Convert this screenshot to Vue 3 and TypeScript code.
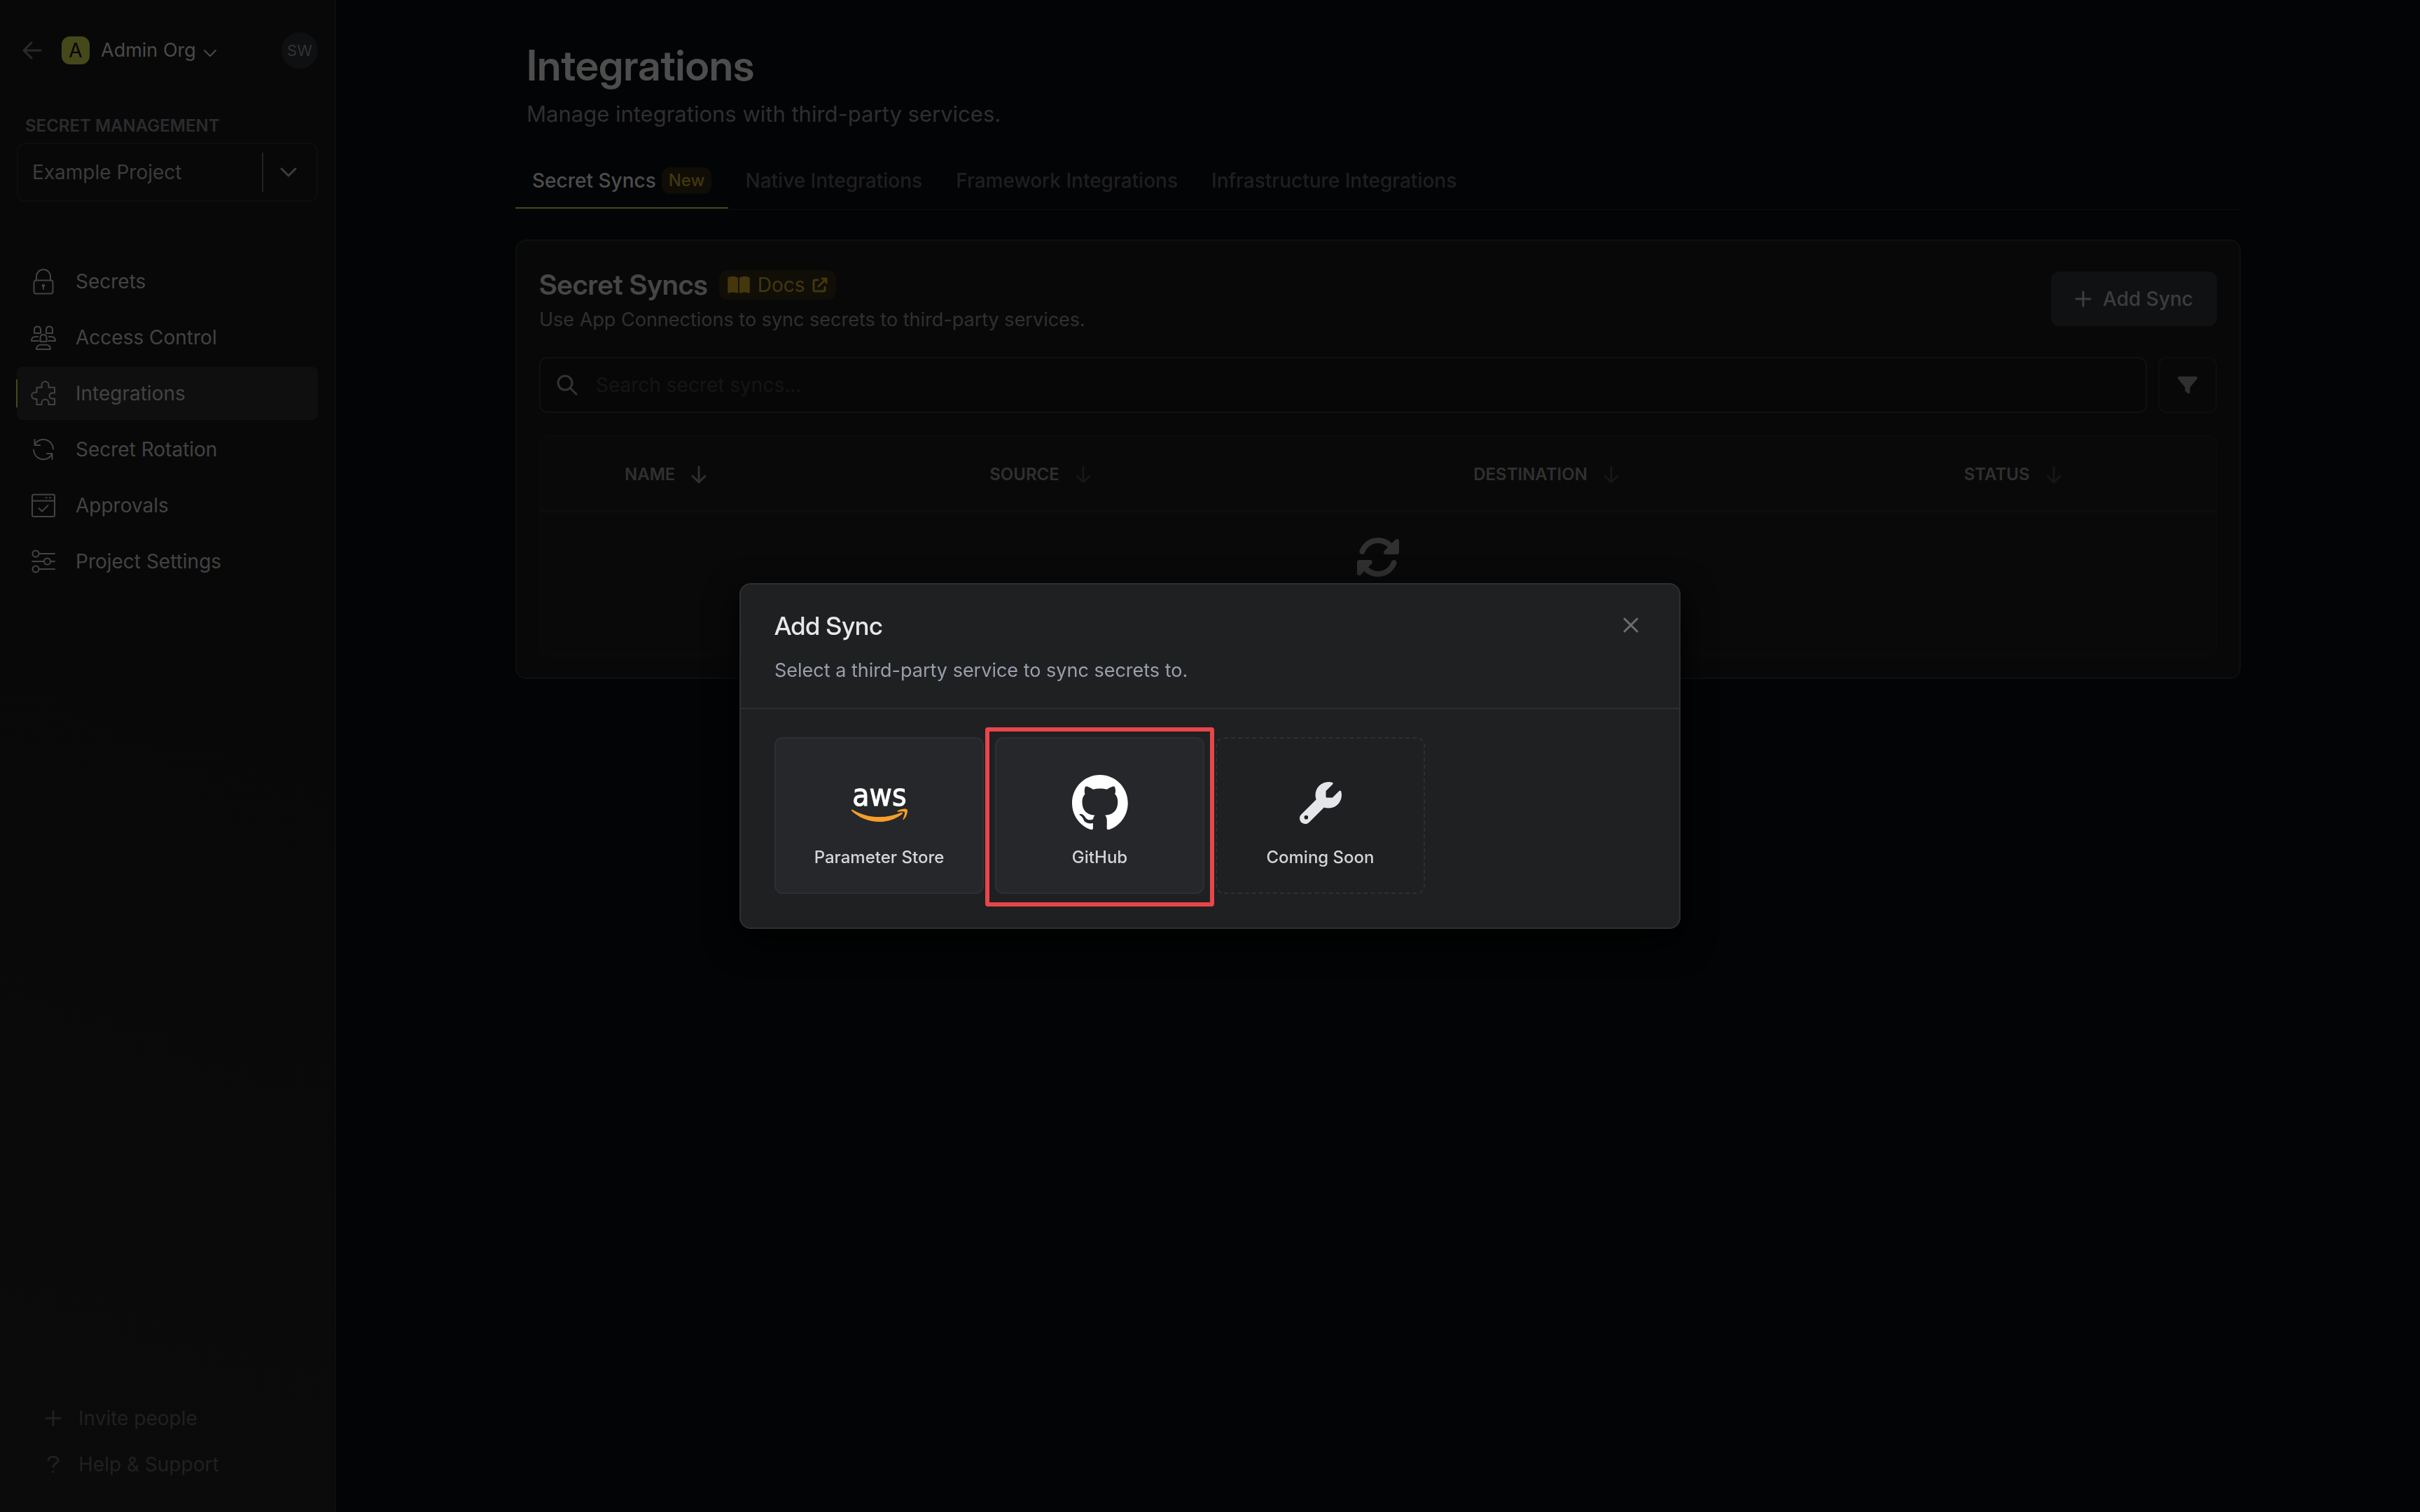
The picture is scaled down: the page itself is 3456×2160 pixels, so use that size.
<script setup lang="ts">
import { ref } from 'vue'

interface NavItem {
  label: string
  paths: string[]
}

interface Column {
  label: string
  width: string
  sorted: boolean
}

const navItems: NavItem[] = [
  {
    label: 'Secrets',
    paths: [
      'M7.5 16.5h21a3 3 0 0 1 3 3v13a3 3 0 0 1-3 3h-21a3 3 0 0 1-3-3v-13a3 3 0 0 1 3-3z',
      'M8 16.5V11a10 10 0 0 1 20 0v5.5',
      'M17 23h2v2h-2zM18 25v4',
    ],
  },
  {
    label: 'Access Control',
    paths: [
      'M9.5 2.5c3 0 4.5 2 4.5 4.5v5H5V7c0-2.5 1.5-4.5 4.5-4.5z',
      'M26.5 2.5c3 0 4.5 2 4.5 4.5v5h-9V7c0-2.5 1.5-4.5 4.5-4.5z',
      'M18 14c3 0 4.5 2 4.5 4.5v5.5h-9v-5.5c0-2.5 1.5-4.5 4.5-4.5z',
      'M10 17H7c-4 0-6 2.5-6 6h10M26 17h3c4 0 6 2.5 6 6H25',
      'M8 35c0-4 2.5-6.5 7-6.5h6c4.5 0 7 2.5 7 6.5z',
    ],
  },
  {
    label: 'Integrations',
    paths: [
      'M8.5 9.5h7V6a5 5 0 0 1 10 0v3.5H34v8h-3.5a4 4 0 0 0 0 8H34V34h-8.5v-2.5a5 5 0 0 0-10 0V34h-7v-8H6a4.75 4.75 0 0 1 0-9.5h2.5z',
    ],
  },
  {
    label: 'Secret Rotation',
    paths: [
      'M6 10.5A14 14 0 0 1 32 17.5M5.5 4v8H13',
      'M4 18.5A14 14 0 0 0 30 25.5M23 24h7.5v8',
    ],
  },
  {
    label: 'Approvals',
    paths: [
      'M4 2.5h28a2 2 0 0 1 2 2V32a2 2 0 0 1-2 2H4a2 2 0 0 1-2-2V4.5a2 2 0 0 1 2-2z',
      'M2 11.5h32M21.5 7h1M27 7h1',
      'M11.5 22l4.5 4.5 8.5-8.5',
    ],
  },
  {
    label: 'Project Settings',
    paths: [
      'M11.5 7a4.5 4.5 0 1 1-9 0 4.5 4.5 0 0 1 9 0zM11.5 7H34',
      'M28 18a4.5 4.5 0 1 1-9 0 4.5 4.5 0 0 1 9 0zM2 18h17M28 18h6',
      'M11.5 29a4.5 4.5 0 1 1-9 0 4.5 4.5 0 0 1 9 0zM11.5 29H34',
    ],
  },
]

const tabs = ['Secret Syncs', 'Native Integrations', 'Framework Integrations', 'Infrastructure Integrations']

const columns: Column[] = [
  { label: 'Name', width: '21.8%', sorted: true },
  { label: 'Source', width: '28.9%', sorted: false },
  { label: 'Destination', width: '29.3%', sorted: false },
  { label: 'Status', width: '16.7%', sorted: false },
]

const activeNav = ref('Integrations')
const activeTab = ref('Secret Syncs')
const project = ref('Example Project')
const search = ref('')
const modalOpen = ref(true)
</script>

<template>
  <div class="app">
    <aside class="sidebar">
      <div class="org">
        <button class="plain back" type="button" aria-label="Back">
          <svg width="28" height="26" viewBox="0 0 28 26" class="line thick"><path d="M13 2L2 13l11 11M2 13h24" /></svg>
        </button>
        <button class="plain org-switch" type="button">
          <span class="org-badge">A</span>
          <span class="org-name">Admin Org</span>
          <svg width="20" height="12" viewBox="0 0 20 12" class="line org-chevron"><path d="M2 2l8 8 8-8" /></svg>
        </button>
        <button class="plain avatar" type="button">SW</button>
      </div>

      <label class="section-label" for="project">SECRET MANAGEMENT</label>
      <div class="project">
        <select id="project" v-model="project">
          <option>Example Project</option>
        </select>
        <svg width="24" height="14" viewBox="0 0 24 14" class="line thick"><path d="M2 2l10 10L22 2" /></svg>
      </div>

      <nav class="nav">
        <a
          v-for="item in navItems"
          :key="item.label"
          href="#"
          :class="{ active: item.label === activeNav }"
          @click.prevent="activeNav = item.label"
        >
          <svg width="36" height="36" viewBox="0 0 36 36" class="line"><path v-for="d in item.paths" :key="d" :d="d" /></svg>
          {{ item.label }}
        </a>
      </nav>

      <div class="foot">
        <a href="#" @click.prevent>
          <svg width="24" height="24" viewBox="0 0 24 24" class="line thick"><path d="M12 2v20M2 12h20" /></svg>
          Invite people
        </a>
        <a href="#" @click.prevent>
          <svg width="24" height="24" viewBox="0 0 24 24" class="line thick"><path d="M5 6c0-3 3-5 7-5s7 2 7 5.5c0 4.5-7 4-7 9M12 22v.5" /></svg>
          Help &amp; Support
        </a>
      </div>
    </aside>

    <main class="main">
      <div class="content">
        <header class="page-head">
          <h1 class="display">Integrations</h1>
          <p>Manage integrations with third-party services.</p>
        </header>

        <div class="tabs" role="tablist">
          <button
            v-for="tab in tabs"
            :key="tab"
            class="plain"
            type="button"
            role="tab"
            :aria-selected="tab === activeTab"
            :class="{ active: tab === activeTab }"
            @click="activeTab = tab"
          >
            {{ tab }}<span v-if="tab === 'Secret Syncs'" class="new">New</span>
          </button>
        </div>

        <section class="card">
          <div class="card-head">
            <div>
              <div class="card-title">
                <h2 class="display">Secret Syncs</h2>
                <a href="#" class="docs" @click.prevent>
                  <svg width="32" height="28" viewBox="0 0 576 512" class="solid"><path d="M249.6 471.5c10.8 3.8 22.4-4.1 22.4-15.5V78.6c0-4.2-1.6-8.4-5-11C247.4 52 202.4 32 144 32C93.5 32 46.3 45.3 18.1 56.1C6.8 60.5 0 71.7 0 83.8V454.1c0 11.9 12.8 20.2 24.1 16.5C55.6 460.1 105.5 448 144 448c33.9 0 79 14 105.6 23.5zm76.8 0C353 462 398.1 448 432 448c38.5 0 88.4 12.1 119.9 22.6c11.3 3.8 24.1-4.6 24.1-16.5V83.8c0-12.1-6.8-23.3-18.1-27.6C529.7 45.3 482.5 32 432 32c-58.4 0-103.4 20-123 35.6c-3.3 2.6-5 6.8-5 11V456c0 11.4 11.7 19.3 22.4 15.5z" /></svg>
                  Docs
                  <svg width="22" height="22" viewBox="0 0 22 22" class="line thick"><path d="M8 4H4a2 2 0 0 0-2 2v12a2 2 0 0 0 2 2h12a2 2 0 0 0 2-2v-4M14 2h6v6M20 2L9 13" /></svg>
                </a>
              </div>
              <p>Use App Connections to sync secrets to third-party services.</p>
            </div>
            <button class="plain add" type="button" @click="modalOpen = true">
              <svg width="24" height="24" viewBox="0 0 24 24" class="line thick"><path d="M12 2v20M2 12h20" /></svg>
              Add Sync
            </button>
          </div>

          <div class="filters">
            <label class="search">
              <svg width="30" height="30" viewBox="0 0 30 30" class="line thick"><path d="M22 12a10 10 0 1 1-20 0 10 10 0 0 1 20 0zM19.5 19.5L28 28" /></svg>
              <input v-model="search" type="text" placeholder="Search secret syncs..." aria-label="Search secret syncs" />
            </label>
            <button class="plain filter" type="button" aria-label="Filter">
              <svg width="28" height="28" viewBox="0 0 512 512" class="solid"><path d="M3.9 54.9C10.5 40.9 24.5 32 40 32H472c15.5 0 29.5 8.9 36.1 22.9s4.6 30.5-5.2 42.5L320 320.9V448c0 12.1-6.8 23.2-17.7 28.6s-23.8 4.3-33.5-3l-64-48c-8.1-6-12.8-15.5-12.8-25.6V320.9L9 97.3C-.7 85.4-2.8 68.8 3.9 54.9z" /></svg>
            </button>
          </div>

          <div class="table-box">
            <table>
              <colgroup>
                <col class="icon-col" />
                <col v-for="c in columns" :key="c.label" :style="{ width: c.width }" />
              </colgroup>
              <thead>
                <tr>
                  <th></th>
                  <th v-for="c in columns" :key="c.label" scope="col">
                    <span class="th">
                      {{ c.label }}
                      <button class="plain sort" :class="{ sorted: c.sorted }" type="button" :aria-label="'Sort by ' + c.label">
                        <svg width="24" height="26" viewBox="0 0 24 26" class="line thick"><path d="M12 2v22M3 15l9 9 9-9" /></svg>
                      </button>
                    </span>
                  </th>
                </tr>
              </thead>
              <tbody>
                <tr>
                  <td colspan="5">
                    <svg width="64" height="64" viewBox="0 0 512 512" class="solid"><path d="M142.9 142.9c62.2-62.2 162.7-62.5 225.3-1L327 183c-6.9 6.9-8.9 17.2-5.2 26.2s12.5 14.8 22.2 14.8H472c13.3 0 24-10.7 24-24V72c0-9.7-5.8-18.5-14.8-22.2s-19.3-1.7-26.2 5.2L413.4 96.6c-87.6-86.5-228.7-86.2-315.8 1C73.2 122 55.6 150.7 44.8 181.4c-5.9 16.7 2.9 34.9 19.5 40.8s34.9-2.9 40.8-19.5c7.7-21.8 20.2-42.3 37.8-59.8zM16 312V440c0 9.7 5.8 18.5 14.8 22.2s19.3 1.7 26.2-5.2l41.6-41.6c87.6 86.5 228.7 86.2 315.8-1c24.4-24.4 42.1-53.1 52.9-83.7c5.9-16.7-2.9-34.9-19.5-40.8s-34.9 2.9-40.8 19.5c-7.7 21.8-20.2 42.3-37.8 59.8c-62.2 62.2-162.7 62.5-225.3 1L185 329c6.9-6.9 8.9-17.2 5.2-26.2s-12.5-14.8-22.2-14.8H40c-13.3 0-24 10.7-24 24z" /></svg>
                  </td>
                </tr>
              </tbody>
            </table>
          </div>
        </section>
      </div>
    </main>

    <div v-if="modalOpen" class="overlay">
      <div class="modal" role="dialog" aria-labelledby="modal-title">
        <header class="modal-head">
          <div>
            <h2 id="modal-title" class="display">Add Sync</h2>
            <p>Select a third-party service to sync secrets to.</p>
          </div>
          <button class="plain close" type="button" aria-label="Close" @click="modalOpen = false">
            <svg width="24" height="24" viewBox="0 0 24 24" class="line thick"><path d="M3 3l18 18M21 3L3 21" /></svg>
          </button>
        </header>
        <div class="tiles">
          <button class="plain tile" type="button">
            <svg width="80" height="80" viewBox="0 0 80 80">
              <text x="40" y="44" text-anchor="middle" class="aws">aws</text>
              <path d="M0 50.5c0-1 1-1.2 2-.6C13 56.5 26 60 40 60c10.5 0 21-2.2 31-6.3 1.7-.7 2.9 1 1.3 2.2C63 63 51.5 67 40 67 25.5 67 11 61.5.8 52c-.5-.5-.8-1-.8-1.5z" fill="#f59e2b" />
              <path d="M65.5 51.5c4-3 12.5-4 14-2 1.3 1.7-.3 10-4.8 14.2-.8.7-1.6.3-1.2-.7 1.2-2.9 3.3-8.7 2.4-10-1-1.3-6.7-.7-9.7-.3-.9.1-1.3-.7-.7-1.2z" fill="#f59e2b" />
            </svg>
            Parameter Store
          </button>
          <button class="plain tile highlighted" type="button">
            <svg width="80" height="80" viewBox="0 0 98 98" class="github"><path d="M48.854 0C21.839 0 0 22 0 49.217c0 21.756 13.993 40.172 33.405 46.69 2.427.49 3.316-1.059 3.316-2.362 0-1.141-.08-5.052-.08-9.127-13.59 2.934-16.42-5.867-16.42-5.867-2.184-5.704-5.42-7.17-5.42-7.17-4.448-3.015.324-3.015.324-3.015 4.934.326 7.523 5.052 7.523 5.052 4.367 7.496 11.404 5.378 14.235 4.074.404-3.178 1.699-5.378 3.074-6.6-10.839-1.141-22.243-5.378-22.243-24.283 0-5.378 1.94-9.778 5.014-13.2-.485-1.222-2.184-6.275.486-13.038 0 0 4.125-1.304 13.426 5.052a46.97 46.97 0 0 1 12.214-1.63c4.125 0 8.33.571 12.213 1.63 9.302-6.356 13.427-5.052 13.427-5.052 2.67 6.763.97 11.816.485 13.038 3.155 3.422 5.015 7.822 5.015 13.2 0 18.905-11.404 23.06-22.324 24.283 1.78 1.548 3.316 4.481 3.316 9.126 0 6.6-.08 11.897-.08 13.526 0 1.304.89 2.853 3.316 2.364 19.412-6.52 33.405-24.935 33.405-46.691C97.707 22 75.788 0 48.854 0z" /></svg>
            GitHub
          </button>
          <div class="tile soon">
            <svg width="80" height="60" viewBox="0 0 512 512" class="solid wrench"><path d="M352 320c88.4 0 160-71.6 160-160c0-15.3-2.2-30.1-6.2-44.2c-3.1-10.8-16.4-13.2-24.3-5.3l-76.8 76.8c-3 3-7.1 4.7-11.3 4.7L336 192c-8.8 0-16-7.2-16-16l0-57.4c0-4.2 1.7-8.3 4.7-11.3l76.8-76.8c7.9-7.9 5.4-21.2-5.3-24.3C382.1 2.2 367.3 0 352 0C263.6 0 192 71.6 192 160c0 19.1 3.4 37.5 9.5 54.5L19.9 396.1C7.2 408.8 0 426.1 0 444.1C0 481.6 30.4 512 67.9 512c18 0 35.3-7.2 48-19.9L297.5 310.5c17 6.2 35.4 9.5 54.5 9.5zM80 408a24 24 0 1 1 0 48 24 24 0 1 1 0-48z" /></svg>
            Coming Soon
          </div>
        </div>
      </div>
    </div>
  </div>
</template>

<style>
body {
  margin: 0;
  background: #030406;
}
</style>

<style scoped>
.app,
.app * {
  box-sizing: border-box;
}

.app {
  display: flex;
  min-height: 100vh;
  font-family: Inter, "Liberation Sans", sans-serif;
  font-size: 28px;
  line-height: 40px;
  color: #434343;
}

.display {
  font-family: "Inter Display", Inter, "Liberation Sans", sans-serif;
}

h1,
h2,
p {
  margin: 0;
}

a {
  color: inherit;
  text-decoration: none;
}

svg {
  display: block;
  flex: none;
}

.line {
  fill: none;
  stroke: currentColor;
  stroke-width: 2;
  stroke-linecap: round;
  stroke-linejoin: round;
}

.nav .line {
  overflow: visible;
}

.line.thick {
  stroke-width: 3;
}

.solid {
  fill: currentColor;
}

.plain {
  margin: 0;
  padding: 0;
  border: 0;
  background: none;
  font: inherit;
  color: inherit;
  cursor: pointer;
}

/* Sidebar */
.sidebar {
  display: flex;
  flex: none;
  flex-direction: column;
  width: 480px;
  padding: 46px 24px;
  border-right: 2px solid #0e0e0f;
  background: linear-gradient(200deg, #080808 40%, #0b0b0b);
}

.org {
  display: flex;
  align-items: center;
  height: 52px;
  padding-left: 8px;
}

.back {
  color: #2a2a2a;
}

.org-switch {
  display: flex;
  align-items: center;
  margin-left: 28px;
  color: #4a4a4a;
}

.org-badge {
  width: 40px;
  height: 40px;
  margin-right: 16px;
  border-radius: 12px;
  background: #454919;
  color: #050505;
}

.org-name {
  font-size: 27px;
}

.org-chevron {
  margin: 8px 0 0 10px;
}

.avatar {
  width: 52px;
  height: 52px;
  margin-left: auto;
  border-radius: 50%;
  background: #0f1012;
  color: #333335;
  font-size: 22px;
}

.section-label {
  margin-top: 62px;
  padding-left: 12px;
  font-size: 24px;
  font-weight: 600;
  color: #2b2b2e;
}

.project {
  display: flex;
  align-items: center;
  gap: 24px;
  height: 84px;
  margin-top: 4px;
  padding-right: 28px;
  border: 2px solid #0e0e0f;
  border-radius: 12px;
  color: #3c3c3c;
}

.project select {
  flex: 1;
  height: 56px;
  padding: 0 20px;
  border: 0;
  border-right: 2px solid #232325;
  background: none;
  appearance: none;
  font: inherit;
  color: inherit;
}

.nav {
  display: flex;
  flex-direction: column;
  gap: 4px;
  margin-top: 76px;
}

.nav a {
  display: flex;
  align-items: center;
  gap: 28px;
  height: 76px;
  padding-left: 20px;
  border-radius: 8px;
}

.nav a.active {
  position: relative;
  background: #0f0f0f;
}

.nav a.active::before {
  content: "";
  position: absolute;
  left: -1px;
  top: 18px;
  width: 2px;
  height: 40px;
  background: #454919;
}

.foot {
  display: flex;
  flex-direction: column;
  gap: 26px;
  margin-top: auto;
  padding-left: 40px;
  padding-bottom: 2px;
  color: #202022;
}

.foot a {
  display: flex;
  align-items: center;
  gap: 24px;
}

/* Page */
.main {
  flex: 1;
  min-width: 0;
  padding: 57px 48px 0;
}

.content {
  max-width: 2464px;
  margin: 0 auto;
}

.page-head {
  padding-left: 16px;
}

h1 {
  font-size: 60px;
  font-weight: 600;
  line-height: 72px;
  color: #4d4d4d;
}

.page-head p {
  margin-top: 10px;
  font-size: 31px;
  line-height: 48px;
  color: #2f2f2f;
}

.tabs {
  display: flex;
  margin-top: 31px;
  border-bottom: 2px solid #0a0a0b;
}

.tabs button {
  display: flex;
  align-items: center;
  height: 80px;
  padding: 2px 24px 0;
  border-bottom: 2px solid transparent;
  font-weight: 500;
  color: #1f1f20;
}

.tabs button.active {
  border-color: #454919;
  color: #4d4d4d;
}

.new {
  margin-left: 8px;
  padding: 0 10px;
  border-radius: 12px;
  background: #0f0d06;
  font-size: 24px;
  line-height: 38px;
  color: #44370c;
}

.card {
  margin-top: 42px;
  padding: 44px 32px 30px;
  border: 2px solid #0e0f10;
  border-radius: 16px;
  background: #080808;
}

.card-head {
  display: flex;
  justify-content: space-between;
  align-items: flex-start;
}

.card-title {
  display: flex;
  align-items: center;
  gap: 16px;
  height: 38px;
}

.card-title h2 {
  font-size: 40px;
  font-weight: 600;
  color: #464646;
}

.docs {
  display: flex;
  align-items: center;
  gap: 11px;
  height: 42px;
  padding: 0 12px;
  border-radius: 12px;
  background: #100e07;
  color: #44370c;
}

.card-head p {
  margin-top: 12px;
  font-size: 27px;
  line-height: 38px;
  color: #303030;
}

.add {
  display: flex;
  align-items: center;
  gap: 16px;
  height: 78px;
  padding: 0 34px;
  border-radius: 12px;
  background: #101113;
  font-weight: 500;
  color: #3d3d3f;
}

.filters {
  display: flex;
  gap: 16px;
  margin-top: 34px;
}

.search {
  display: flex;
  flex: 1;
  align-items: center;
  gap: 26px;
  height: 80px;
  padding: 0 23px;
  border: 2px solid #111112;
  border-radius: 12px;
  background: #070707;
  color: #333337;
}

.search input {
  flex: 1;
  min-width: 0;
  height: 56px;
  padding: 0;
  border: 0;
  outline: 0;
  background: none;
  font: inherit;
  color: #434343;
}

.search input::placeholder {
  color: #151517;
  opacity: 1;
}

.filter {
  display: grid;
  place-items: center;
  width: 84px;
  height: 80px;
  border: 2px solid #0e0e0f;
  border-radius: 12px;
  color: #2f2f2f;
}

.table-box {
  margin-top: 32px;
  overflow: hidden;
  border: 2px solid #0b0b0b;
  border-radius: 12px;
  background: #090909;
}

table {
  width: 100%;
  table-layout: fixed;
  border-collapse: separate;
  border-spacing: 0;
}

.icon-col {
  width: 80px;
}

th {
  height: 108px;
  padding: 4px 0 0 40px;
  border-bottom: 4px solid #0d0d0d;
  font-size: 24px;
  font-weight: 600;
  text-align: left;
  text-transform: uppercase;
  color: #303030;
}

.th {
  display: flex;
  align-items: center;
  gap: 22px;
}

.sort {
  color: #161616;
}

.sort.sorted {
  color: #303030;
}

td {
  height: 204px;
  padding: 32px 0 0;
  vertical-align: top;
  color: #303030;
}

td svg {
  margin: 0 auto;
}

/* Dialog */
.overlay {
  position: fixed;
  inset: 0;
  display: grid;
  place-items: center;
}

.modal {
  width: 1344px;
  max-width: 100%;
  border: 2px solid #2d2f32;
  border-radius: 16px;
  background: #1f2022;
  box-shadow: 0 16px 48px #000000;
}

.modal-head {
  display: flex;
  justify-content: space-between;
  align-items: flex-start;
  padding: 35px 48px 33px;
  border-bottom: 2px solid #2d2f32;
}

.modal-head h2 {
  font-size: 36px;
  font-weight: 500;
  line-height: 48px;
  color: #e8e8ea;
}

.modal-head p {
  margin-top: 20px;
  font-size: 27px;
  color: #9a9fac;
}

.close {
  margin: 11px 9px 0 0;
  color: #6c6d71;
}

.tiles {
  display: grid;
  grid-template-columns: repeat(4, 1fr);
  gap: 16px;
  padding: 40px 48px 48px;
}

.tile {
  position: relative;
  display: flex;
  flex-direction: column;
  align-items: center;
  height: 224px;
  padding-top: 52px;
  border: 2px solid #2d2f32;
  border-radius: 12px;
  background: #26272b;
  font-size: 24px;
  font-weight: 500;
  color: #d4d5d8;
}

.tile svg {
  height: 80px;
  margin-bottom: 18px;
}

.tile .wrench {
  height: 60px;
  margin: 10px 0 28px;
  color: #e5e6ea;
}

.soon {
  border-style: dashed;
  background: none;
}

.github {
  fill: #ffffff;
}

.aws {
  font-family: "DejaVu Sans Condensed", "DejaVu Sans", sans-serif;
  font-size: 44px;
  font-weight: 400;
  fill: #ffffff;
  stroke: #ffffff;
  stroke-width: 1px;
}

.highlighted::after {
  content: "";
  position: absolute;
  z-index: 1;
  inset: -16px -16px -20px;
  border: 6px solid #e8464a;
  border-radius: 4px;
}
</style>
